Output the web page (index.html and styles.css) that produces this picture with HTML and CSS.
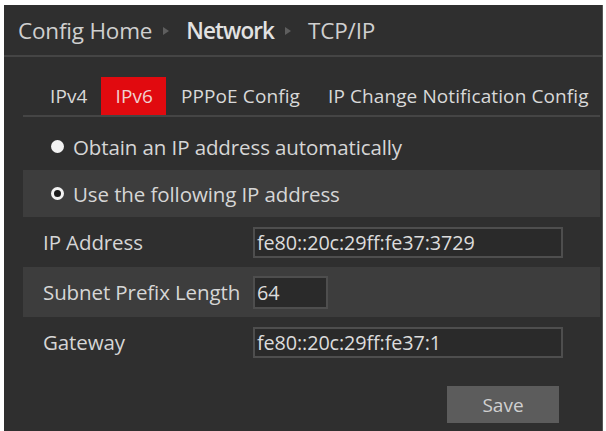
FILE: index.html
```html
<!DOCTYPE html>
<html lang="en">
<head>
<meta charset="utf-8">
<title>TCP/IP</title>
<link rel="stylesheet" href="styles.css">
</head>
<body>
<div class="panel">
  <div class="crumbs">
    <span class="crumb">Config Home</span>
    <span class="sep"></span>
    <span class="crumb current">Network</span>
    <span class="sep"></span>
    <span class="crumb">TCP/IP</span>
  </div>
  <div class="tabs">
    <span class="tab">IPv4</span>
    <span class="tab active">IPv6</span>
    <span class="tab">PPPoE Config</span>
    <span class="tab">IP Change Notification Config</span>
  </div>
  <div class="content">
    <div class="row radio-row">
      <span class="radio"></span>
      <span class="radio-label">Obtain an IP address automatically</span>
    </div>
    <div class="row radio-row alt">
      <span class="radio checked"></span>
      <span class="radio-label">Use the following IP address</span>
    </div>
    <div class="row field-row">
      <span class="label">IP Address</span>
      <span class="input wide">fe80::20c:29ff:fe37:3729</span>
    </div>
    <div class="row field-row alt">
      <span class="label">Subnet Prefix Length</span>
      <span class="input short">64</span>
    </div>
    <div class="row field-row">
      <span class="label">Gateway</span>
      <span class="input wide">fe80::20c:29ff:fe37:1</span>
    </div>
    <div class="actions">
      <button class="save">Save</button>
    </div>
  </div>
</div>
</body>
</html>
```
FILE: styles.css
```css
html, body {
  margin: 0;
  padding: 0;
  background: #ffffff;
}
body {
  padding: 5px 3px 0 4px;
  font-family: "Open Sans", "Noto Sans", sans-serif;
  color: #d6d6d6;
}
.panel {
  background: #2f2f2f;
  height: 426px;
  box-sizing: border-box;
  border-right: 1px solid #555;
}
.crumbs {
  height: 50px;
  display: flex;
  align-items: center;
  padding-left: 14px;
  font-size: 22.5px;
  border-bottom: 2px solid #454545;
  letter-spacing: -0.2px;
}
.crumb { color: #cfcfcf; }
.crumb.current { color: #e2e2e2; font-weight: 600; letter-spacing: -0.9px; }
.sep {
  width: 0;
  height: 0;
  border-left: 6px solid #5e5e5e;
  border-top: 4px solid transparent;
  border-bottom: 4px solid transparent;
  margin: 2px 17px 0 11px;
}
.tabs {
  margin: 20px 2px 0 19px;
  padding-left: 12px;
  display: flex;
  border-bottom: 2px solid #454545;
  font-size: 19px;
  letter-spacing: 0.1px;
  white-space: nowrap;
}
.tab {
  flex: none;
  height: 38px;
  line-height: 38px;
  padding: 0 13px 0 15px;
  color: #d9d9d9;
}
.tab.active {
  background: #e10a0f;
  color: #f0d0d0;
}
.content {
  margin: 0 2px 0 19px;
}
.row {
  display: flex;
  align-items: center;
}
.alt { background: #3d3d3d; }
.radio-row {
  height: 47px;
  padding-left: 28px;
  font-size: 20.5px;
  letter-spacing: -0.1px;
}
.radio-row:first-child {
  margin-top: 6px;
}
.radio {
  width: 13px;
  height: 13px;
  border-radius: 50%;
  background: #f2f2f2;
  box-sizing: border-box;
  margin-right: 9px;
  flex: none;
}
.radio.checked {
  border: 3px solid #f2f2f2;
  background: #1a1a1a;
}
.field-row {
  height: 50px;
  font-size: 20.5px;
  letter-spacing: -0.1px;
}
.label {
  width: 210px;
  padding-left: 20px;
  flex: none;
}
.input {
  height: 31px;
  box-sizing: border-box;
  border: 2px solid #4e4e4e;
  background: #2a2a2a;
  padding-left: 2px;
  display: flex;
  align-items: center;
  color: #dcdcdc;
  font-size: 19.8px;
  letter-spacing: -0.1px;
  overflow: hidden;
  white-space: nowrap;
}
.wide { width: 310px; }
.short { width: 75px; height: 33px; }
.actions {
  display: flex;
  justify-content: flex-end;
  padding: 19px 41px 0 0;
}
.save {
  width: 112px;
  height: 37px;
  border: none;
  background: #5c5c5c;
  color: #d0d0d0;
  font-family: "Open Sans", "Noto Sans", sans-serif;
  font-size: 19px;
}
```
